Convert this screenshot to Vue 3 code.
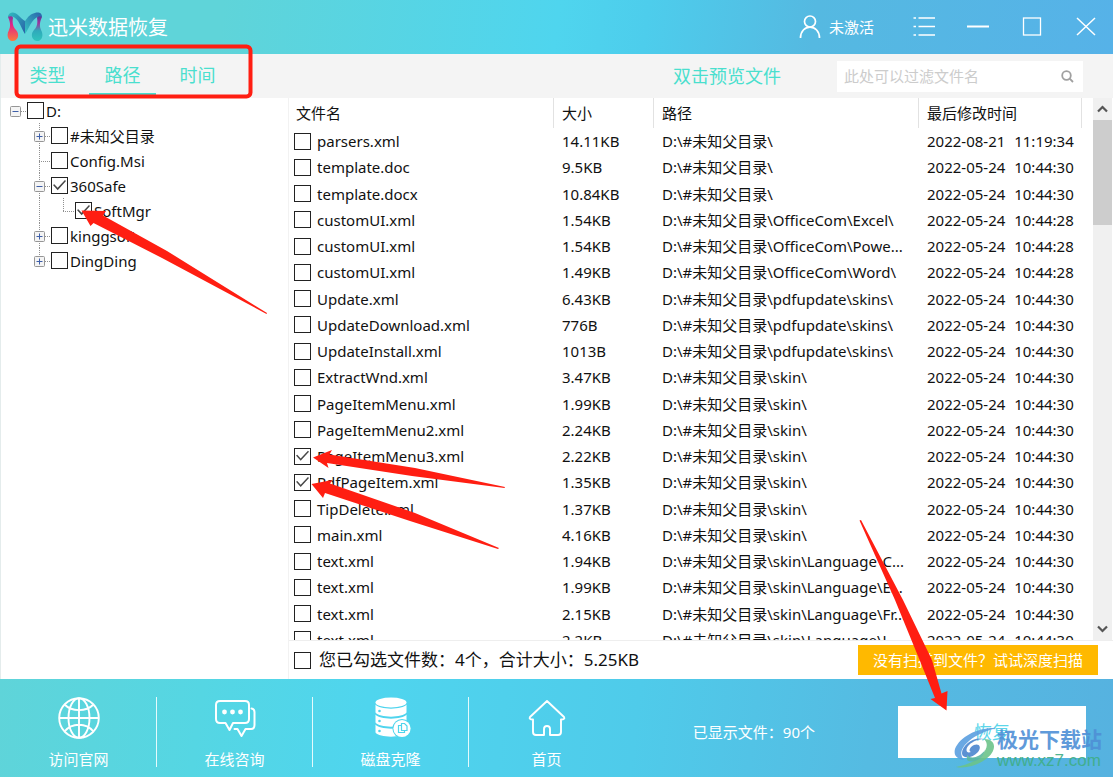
<script setup>
import { ref, reactive } from 'vue'

const tabs = ['类型', '路径', '时间']
const activeTab = ref('路径')
const filter = ref('')
const selectAll = ref(false)

const tree = reactive([
  { id: 'd', name: 'D:', guides: [{ box: '-' }], checked: false },
  { id: 'u', name: '#未知父目录', guides: [{}, { line: 'full', box: '+' }], checked: false },
  { id: 'c', name: 'Config.Msi', guides: [{}, { line: 'full' }], checked: false },
  { id: 's', name: '360Safe', guides: [{}, { line: 'full', box: '-' }], checked: true },
  { id: 'm', name: 'SoftMgr', guides: [{}, { line: 'full' }, { line: 'half' }], checked: true },
  { id: 'k', name: 'kinggsoft', guides: [{}, { line: 'full', box: '+' }], checked: false },
  { id: 'g', name: 'DingDing', guides: [{}, { line: 'half', box: '+' }], checked: false }
])

const root = 'D:\\#未知父目录\\'
const files = reactive(
  [
    ['parsers.xml', '14.11KB', '', '2022-08-21', '11:19:34'],
    ['template.doc', '9.5KB', ''],
    ['template.docx', '10.84KB', ''],
    ['customUI.xml', '1.54KB', 'OfficeCom\\Excel\\', '2022-05-24', '10:44:28'],
    ['customUI.xml', '1.54KB', 'OfficeCom\\Powe...', '2022-05-24', '10:44:28'],
    ['customUI.xml', '1.49KB', 'OfficeCom\\Word\\', '2022-05-24', '10:44:28'],
    ['Update.xml', '6.43KB', 'pdfupdate\\skins\\'],
    ['UpdateDownload.xml', '776B', 'pdfupdate\\skins\\'],
    ['UpdateInstall.xml', '1013B', 'pdfupdate\\skins\\'],
    ['ExtractWnd.xml', '3.47KB', 'skin\\'],
    ['PageItemMenu.xml', '1.99KB', 'skin\\'],
    ['PageItemMenu2.xml', '2.24KB', 'skin\\'],
    ['PageItemMenu3.xml', '2.22KB', 'skin\\', '2022-05-24', '10:44:30', true],
    ['PdfPageItem.xml', '1.35KB', 'skin\\', '2022-05-24', '10:44:30', true],
    ['TipDelete.xml', '1.37KB', 'skin\\'],
    ['main.xml', '4.16KB', 'skin\\'],
    ['text.xml', '1.94KB', 'skin\\Language\\C...'],
    ['text.xml', '1.99KB', 'skin\\Language\\E...'],
    ['text.xml', '2.15KB', 'skin\\Language\\Fr...'],
    ['text.xml', '2.2KB', 'skin\\Language\\J...']
  ].map(([name, size, path, date = '2022-05-24', time = '10:44:30', checked = false]) => ({
    name, size, path: root + path, date, time, checked
  }))
)
</script>

<template>
  <div class="window">
    <header class="titlebar">
      <svg class="logo" viewBox="0 0 36 30" aria-hidden="true">
        <defs>
          <linearGradient id="lgA" x1="0" y1="0" x2="0" y2="1">
            <stop offset="0" stop-color="#7a3c9c" /><stop offset=".35" stop-color="#e0218a" /><stop offset="1" stop-color="#fb7a3c" />
          </linearGradient>
          <linearGradient id="lgB" x1="0" y1="0" x2="1" y2="1">
            <stop offset="0" stop-color="#2fbcc0" /><stop offset="1" stop-color="#2a5fa8" />
          </linearGradient>
          <linearGradient id="lgC" x1="1" y1="0" x2="0" y2="1">
            <stop offset="0" stop-color="#2a62ac" /><stop offset="1" stop-color="#35c4c2" />
          </linearGradient>
          <linearGradient id="lgD" x1="0" y1="0" x2="0" y2="1">
            <stop offset="0" stop-color="#4a3c98" /><stop offset=".3" stop-color="#a0339e" /><stop offset=".6" stop-color="#2fa9bb" /><stop offset="1" stop-color="#2fc4bc" />
          </linearGradient>
        </defs>
        <path d="M1 5C1 2 6 3 6 6C5 11 6 15 9 18C13 22 11 29 6 29C1 29-1 23 2 18C4 14 3 9 1 5Z" fill="url(#lgA)" />
        <path d="M35 5C35 2 30 3 30 6C31 11 30 15 27 18C23 22 25 29 30 29C35 29 37 23 34 18C32 14 33 9 35 5Z" fill="url(#lgD)" />
        <path d="M1 5C2-1 8 0 11 3C14 6 16 8 18 9V22C15 18 14 13 11 9C8 5 4 3 1 5Z" fill="url(#lgB)" />
        <path d="M35 5C35-1 29 0 25 2C21 4 20 7 18 9V22C21 18 22 14 25 10C28 6 32 3 35 5Z" fill="url(#lgC)" />
      </svg>
      <h1>迅米数据恢复</h1>
      <button class="account" type="button">
        <svg width="22" height="24" viewBox="0 0 22 24" fill="none" stroke="#fff" stroke-width="1.7"><circle cx="11" cy="6.500" r="5.500" /><path d="M1.500 23C1.500 16 6 12.200 11 12.200S20.500 16 20.500 23" /></svg>
        <span>未激活</span>
      </button>
      <nav class="controls" aria-label="窗口">
        <button type="button" aria-label="菜单"><svg width="24" height="24" viewBox="0 0 24 24" stroke="#fff" stroke-width="1.700"><path d="M1.500 3H4M1.500 11.500H4M1.500 20H4M6.500 3H23M6.500 11.500H23M6.500 20H23" /></svg></button>
        <button type="button" aria-label="最小化"><svg width="24" height="24" viewBox="0 0 24 24"><path d="M1 11.500H23" stroke="#fff" stroke-width="2" /></svg></button>
        <button type="button" aria-label="最大化"><svg width="24" height="24" viewBox="0 0 24 24"><rect x="3.500" y="3" width="17" height="17" fill="none" stroke="#fff" stroke-width="1.300" /></svg></button>
        <button type="button" aria-label="关闭"><svg width="24" height="24" viewBox="0 0 24 24"><path d="M3 3L21 20M21 3L3 20" stroke="#fff" stroke-width="1.500" /></svg></button>
      </nav>
    </header>

    <div class="toolbar">
      <div class="tabs">
        <button v-for="t in tabs" :key="t" type="button" :class="{ active: t === activeTab }" @click="activeTab = t">{{ t }}</button>
      </div>
      <span class="hint">双击预览文件</span>
      <label class="search">
        <input v-model="filter" type="text" aria-label="过滤文件名" placeholder="此处可以过滤文件名" />
        <svg width="13" height="13" viewBox="0 0 13 13" fill="none" stroke="#a0a0a0" stroke-width="1.800"><circle cx="5.500" cy="5.500" r="4.300" /><path d="M8.700 8.700L12 12" /></svg>
      </label>
    </div>

    <main class="body">
      <aside class="tree">
        <label v-for="n in tree" :key="n.id" class="node">
          <svg v-for="(g, i) in n.guides" :key="i" width="24" height="25" viewBox="0 0 24 25" fill="none">
            <path v-if="g.line === 'full'" d="M12.500 0V25" stroke="#909090" stroke-dasharray="1 1" />
            <path v-if="g.line === 'half'" d="M12.500 0V13" stroke="#909090" stroke-dasharray="1 1" />
            <path v-if="i === n.guides.length - 1" d="M12 13.500H23" stroke="#909090" stroke-dasharray="1 1" />
            <template v-if="g.box">
              <rect x="7.500" y="8.500" width="10" height="10" rx="1" fill="#f4f4f4" stroke="#969696" />
              <path d="M9.500 13.500H15.500" stroke="#3f5fa8" />
              <path v-if="g.box === '+'" d="M12.500 10.500V16.500" stroke="#3f5fa8" />
            </template>
          </svg>
          <input v-model="n.checked" type="checkbox" />
          <span>{{ n.name }}</span>
        </label>
      </aside>

      <section class="pane">
        <div class="list">
          <div class="rows">
            <table>
              <colgroup><col class="c-name" /><col class="c-size" /><col /><col class="c-date" /></colgroup>
              <thead>
                <tr><th>文件名</th><th>大小</th><th>路径</th><th>最后修改时间</th></tr>
              </thead>
              <tbody>
                <tr v-for="(f, i) in files" :key="i">
                  <td><label class="file"><input v-model="f.checked" type="checkbox" /><span>{{ f.name }}</span></label></td>
                  <td>{{ f.size }}</td>
                  <td>{{ f.path }}</td>
                  <td>{{ f.date }} <span class="time">{{ f.time }}</span></td>
                </tr>
              </tbody>
            </table>
          </div>
          <div class="scrollbar">
            <button type="button" aria-label="向上滚动"><svg width="11" height="8" viewBox="0 0 11 8" fill="none" stroke="#555" stroke-width="2.200"><path d="M1 6.500L5.500 2L10 6.500" /></svg></button>
            <div class="track"><div class="thumb"></div></div>
            <button type="button" aria-label="向下滚动"><svg width="11" height="8" viewBox="0 0 11 8" fill="none" stroke="#555" stroke-width="2.200"><path d="M1 1.500L5.500 6L10 1.500" /></svg></button>
          </div>
        </div>
        <div class="status">
          <label><input v-model="selectAll" type="checkbox" /><span>您已勾选文件数：4个，合计大小：5.25KB</span></label>
          <button class="deep" type="button">没有扫描到文件？试试深度扫描</button>
        </div>
      </section>
    </main>

    <footer class="footer">
      <nav class="links">
        <a href="#site">
          <svg width="42" height="42" viewBox="0 0 42 42" fill="none" stroke="#fff" stroke-width="1.900"><circle cx="21" cy="21" r="19.800" /><ellipse cx="21" cy="21" rx="10.500" ry="19.800" /><path d="M21 1V41M1 21H41M6.500 7.500C14 15 28 15 35.500 7.500M6.500 34.500C14 25.500 28 25.500 35.500 34.500" /></svg>
          <span>访问官网</span>
        </a>
        <a href="#chat">
          <svg width="42" height="42" viewBox="0 0 42 42" fill="none" stroke="#fff" stroke-width="2" stroke-linejoin="round" stroke-linecap="round"><path d="M6 4H31Q35 4 35 8V22Q35 26 31 26H19L15.500 33L11.500 26H6Q2 26 2 22V8Q2 4 6 4Z" /><path d="M37.500 11.500Q40.500 12 40.500 15V28Q40.500 32 37 32H31.500L27.500 39L23.500 32H20.500" /><g fill="#fff" stroke="none"><circle cx="10.500" cy="15" r="2.400" /><circle cx="18.500" cy="15" r="2.400" /><circle cx="26.500" cy="15" r="2.400" /></g></svg>
          <span>在线咨询</span>
        </a>
        <a href="#clone">
          <svg width="42" height="42" viewBox="0 0 42 42" fill="#fff"><ellipse cx="21" cy="5.500" rx="15.500" ry="5" /><path d="M5.500 7.500C9 13 33 13 36.500 7.500V15.500C33 21 9 21 5.500 15.500ZM5.500 17.500C9 23 33 23 36.500 17.500V25.500C33 31 9 31 5.500 25.500ZM5.500 27.500C9 33 33 33 36.500 27.500V35.500C33 41 9 41 5.500 35.500Z" /><g fill="#4fd5ec"><circle cx="9.500" cy="14" r="1.300" /><circle cx="9.500" cy="24" r="1.300" /><circle cx="9.500" cy="34" r="1.300" /></g><circle cx="32" cy="31.500" r="9.600" fill="#4fd5ec" /><circle cx="32" cy="31.500" r="8.600" /><path d="M31.500 26.500H34.500L37 29V33.500H31.500ZM31.500 28.500H28.500V35.500H34.500V33.500" fill="none" stroke="#4fd5ec" stroke-width="1.200" /></svg>
          <span>磁盘克隆</span>
        </a>
        <a href="#home">
          <svg width="42" height="42" viewBox="0 0 42 42" fill="none" stroke="#fff" stroke-width="1.900" stroke-linejoin="round"><path d="M21 4L4 20Q2.500 22.500 7 22.500V35Q7 38 10 38H18V32Q18 29 21 29T24 32V38H32Q35 38 35 35V22.500Q39.500 22.500 38 20Z" /></svg>
          <span>首页</span>
        </a>
      </nav>
      <span class="count">已显示文件：90个</span>
      <button class="recover" type="button">恢复</button>
    </footer>

    <svg class="marks" width="1113" height="777" viewBox="0 0 1113 777" aria-hidden="true">
      <rect x="16.500" y="46.500" width="234" height="50" rx="4" fill="none" stroke="#ff1e12" stroke-width="4" />
      <g fill="#ff1e12">
        <path d="M81.500 210.500L106 211L103 215.500L167 251L267 313L266.500 314L162 258L93.500 223L90.500 226Z" />
        <path d="M313 457.500L332 450L329.500 454.500L415 468L505 487L504.500 488L412 476L327 463L328.500 468Z" />
        <path d="M311.500 484L332.500 480L330 483.500L415 513L499 548L498 549L410 521L325 493L323 498Z" />
        <path d="M859.500 520.500L861 520L903 600L932 660L941.500 693.500L947.500 691L946.500 710.500L930.500 699L935 698L920 661L895 600Z" />
      </g>
    </svg>

    <div class="watermark" aria-hidden="true">
      <svg width="44" height="42" viewBox="0 0 44 42">
        <path d="M42 1C25 0 6 9 1 22C-1 30 5 32 10 33C5 27 7 21 15 14C22 8 32 4 42 1Z" fill="#5a9fe0" />
        <path d="M30 12C20 9 8 18 8 26C8 32 18 32 24 25C28 20 25 16 20 18C16 20 14 24 17 25C12 27 11 22 15 18C19 14 25 12 30 12Z" fill="#4b86cf" />
        <path d="M30 12C43 12 43 24 32 32C24 38 12 42 2 40C13 38 22 34 28 28C34 21 34 16 30 12Z" fill="#6cc48a" />
        <path d="M13 28C17 33 26 30 31 23C29 33 18 37 13 33Z" fill="#5cb7a0" />
      </svg>
      <div><strong>极光下载站</strong><em>www.xz7.com</em></div>
    </div>
  </div>
</template>

<style>
html, body { margin: 0; background: #fff; }
</style>

<style scoped>
.window {
  position: relative;
  display: flex;
  flex-direction: column;
  height: 100vh;
  overflow: hidden;
  box-sizing: border-box;
  background: #fff;
  color: #111;
  font: 15px/20px "Noto Sans", "Noto Sans CJK SC", sans-serif;
}
button { border: 0; padding: 0; background: none; font: inherit; color: inherit; cursor: pointer; }
svg { display: block; flex: none; }
input[type="checkbox"] {
  appearance: none;
  flex: none;
  display: block;
  box-sizing: border-box;
  width: 17px;
  height: 17px;
  margin: 0;
  border: 1px solid #222;
  background: #fff;
}
input[type="checkbox"]:checked::before {
  content: "";
  display: block;
  width: 13px;
  height: 13px;
  margin: 1px;
  background: #484848;
  clip-path: polygon(0 46%, 10% 40%, 36% 68%, 92% 8%, 100% 16%, 36% 86%);
}

.titlebar {
  flex: none;
  display: flex;
  align-items: center;
  height: 54px;
  padding: 0 10px 0 7px;
  background: linear-gradient(97deg, #5fd4d9 0%, #5fd4d9 20%, #4fd5ee 50%, #4dcdec 58%, #55b9e1 73%, #56b2e8 100%);
  color: #fff;
}
.logo { width: 36px; height: 30px; margin-right: 5px; }
h1 { flex: 1; margin: 0; padding-top: 2px; font-size: 20px; font-weight: 400; line-height: 24px; }
.account { display: flex; align-items: center; gap: 8px; margin-right: 33px; }
.controls { display: flex; gap: 20px; }
.controls button { display: grid; place-items: center; width: 34px; height: 30px; }

.toolbar {
  flex: none;
  display: flex;
  align-items: center;
  height: 44px;
  padding: 0 30px 0 13px;
  background: #f4f4f4;
  border-left: 1px solid #e4ecec;
  box-sizing: border-box;
  color: #4adfce;
  font-size: 18px;
}
.tabs { display: flex; flex: 1; gap: 8px; align-self: stretch; }
.tabs button { width: 67px; margin-bottom: 3px; padding-top: 3px; border-bottom: 2px solid transparent; }
.tabs .active { border-color: #45ddcf; }
.hint { margin-right: 56px; }
.search {
  display: flex;
  align-items: center;
  width: 246px;
  height: 31px;
  padding: 0 9px 0 7px;
  box-sizing: border-box;
  background: #fff;
}
.search input { flex: 1; min-width: 0; border: 0; padding: 0; outline: 0; background: none; font: inherit; font-size: 15px; color: #333; }
.search input::placeholder { color: #ccc; opacity: 1; }

.body { flex: 1; display: flex; min-height: 0; border-left: 1px solid #e4ecec; }
.tree { flex: none; width: 288px; padding-left: 2px; border-right: 1px solid #f2f2f2; box-sizing: border-box; overflow: hidden; }
.node { display: flex; align-items: center; height: 25px; white-space: nowrap; }
.node span { margin-left: 2px; }

.pane { flex: 1; min-width: 0; display: flex; flex-direction: column; }
.list { flex: 1; min-height: 0; display: flex; gap: 11px; border-bottom: 1px solid #eee; }
.rows { flex: 1; min-width: 0; overflow: hidden; }
table { width: 100%; height: 555px; border-collapse: separate; border-spacing: 0; table-layout: fixed; }
.c-name { width: 265px; }
.c-size { width: 100px; }
.c-date { width: 163px; }
th { height: 30px; padding: 0 0 0 8px; border-right: 1px solid #e2e2e2; font-weight: 400; text-align: left; }
td { padding: 0 0 0 8px; white-space: nowrap; overflow: hidden; }
td:first-child { padding-left: 5px; }
th:first-child { padding-left: 7px; }
.file { display: flex; align-items: center; gap: 6px; }
.time { margin-left: 5px; }

.scrollbar { display: flex; flex-direction: column; width: 19px; margin-right: 1px; background: #f0f0f0; }
.scrollbar button { display: grid; place-items: center; height: 22px; }
.track { flex: 1; }
.thumb { height: 21%; background: #cdcdcd; }

.status {
  flex: none;
  display: flex;
  align-items: center;
  justify-content: space-between;
  height: 38px;
  padding: 0 15px 0 5px;
  font-size: 17px;
}
.status label { display: flex; align-items: center; gap: 8px; }
.deep { width: 240px; height: 30px; background: #ffb900; color: #fff; font-size: 15px; }

.footer {
  flex: none;
  display: flex;
  align-items: center;
  height: 98px;
  padding: 7px 27px 0 1px;
  box-sizing: border-box;
  background: linear-gradient(97deg, #5fd4d9 0%, #55d6e3 18%, #4fd5ee 33%, #4fcbea 57%, #55bbe2 78%, #56b2e0 100%);
  color: #fff;
}
.links { display: flex; flex: 1; }
.links a {
  display: flex;
  flex-direction: column;
  align-items: center;
  justify-content: space-between;
  width: 156px;
  height: 70px;
  box-sizing: border-box;
  border-right: 1px solid #e4fafc;
  color: #fff;
  text-decoration: none;
  line-height: 16px;
}
.links a:last-child { border-color: transparent; }
.count { margin-right: 83px; }
.recover { width: 188px; height: 52px; background: #fff; color: #5cd6ea; font-size: 18px; }

.marks { position: absolute; left: 0; top: 0; pointer-events: none; }
.watermark { position: absolute; right: 11px; bottom: 6px; display: flex; opacity: .9; pointer-events: none; }
.watermark div { display: flex; flex-direction: column; margin-left: -1px; }
.watermark strong { font-size: 21px; line-height: 24px; font-weight: 700; color: #4f90d6; }
.watermark em { font: normal 17px/20px "Liberation Sans", sans-serif; color: #3fae86; }
</style>
